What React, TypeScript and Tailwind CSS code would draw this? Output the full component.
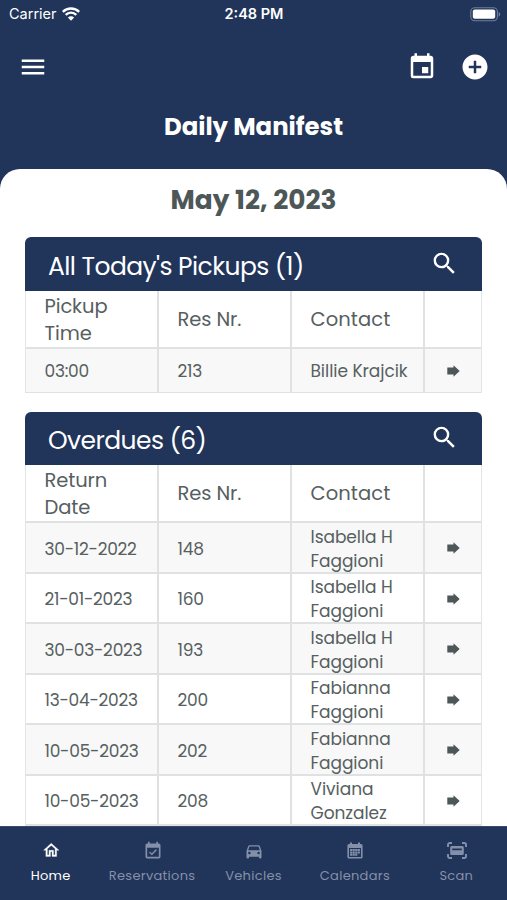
import { MdMenu, MdEvent, MdAddCircle, MdSearch, MdDirectionsCar } from "react-icons/md";
import clsx from "clsx";

type Row = { first: string; res: string; contact: string[] };

const pickups: Row[] = [{ first: "03:00", res: "213", contact: ["Billie Krajcik"] }];

const overdues: Row[] = [
  { first: "30-12-2022", res: "148", contact: ["Isabella H", "Faggioni"] },
  { first: "21-01-2023", res: "160", contact: ["Isabella H", "Faggioni"] },
  { first: "30-03-2023", res: "193", contact: ["Isabella H", "Faggioni"] },
  { first: "13-04-2023", res: "200", contact: ["Fabianna", "Faggioni"] },
  { first: "10-05-2023", res: "202", contact: ["Fabianna", "Faggioni"] },
  { first: "10-05-2023", res: "208", contact: ["Viviana", "Gonzalez"] },
];

function ArrowIcon() {
  return (
    <svg viewBox="0 0 13 12" className="h-3 w-[13px] fill-[#4d5757]">
      <path d="M0.3 2.5H6.5V0.2L12.7 6L6.5 11.8V9.5H0.3Z" />
    </svg>
  );
}

function WifiIcon() {
  return (
    <svg viewBox="0 0 18 14" className="h-3.5 w-[18px]" fill="none" stroke="white" strokeWidth="2.3">
      <path d="M0.8 4.9A11.6 11.6 0 0 1 17.2 4.9" />
      <path d="M3.7 7.9A7.5 7.5 0 0 1 14.3 7.9" />
      <path d="M9 13.7L5.9 10.5A4.4 4.4 0 0 1 12.1 10.5Z" fill="white" stroke="none" />
    </svg>
  );
}

function BatteryIcon() {
  return (
    <svg viewBox="0 0 31 15" className="h-[15px] w-[31px]" fill="none">
      <rect x="0.8" y="0.7" width="26.6" height="13" rx="4" stroke="#6f7e9b" strokeWidth="1.1" />
      <rect x="2.8" y="2.6" width="22.4" height="9.2" rx="2" fill="white" />
      <path d="M28.7 5V9.6C30.7 8.8 30.7 5.8 28.7 5Z" fill="#6f7e9b" />
    </svg>
  );
}

function HomeIcon() {
  return (
    <svg viewBox="0 0 24 24" className="size-[18.5px]" fill="currentColor" stroke="currentColor" strokeWidth="0.4">
      <path d="M12 5.69L17 10.19V18H15V12H9V18H7V10.19L12 5.69M12 3L2 12H5V20H11V14H13V20H19V12H22L12 3Z" />
    </svg>
  );
}

function ReservationIcon() {
  return (
    <svg viewBox="0 0 24 24" className="size-5" fill="currentColor">
      <path d="M19,19H5V8H19M19,3H18V1H16V3H8V1H6V3H5C3.89,3 3,3.9 3,5V19A2,2 0 0,0 5,21H19A2,2 0 0,0 21,19V5A2,2 0 0,0 19,3Z" />
      <path
        d="M16.53,11.06L15.47,10L10.59,14.88L8.47,12.76L7.41,13.82L10.59,17L16.53,11.06Z"
        stroke="currentColor"
        strokeWidth="0.3"
      />
    </svg>
  );
}

function CalendarIcon() {
  return (
    <svg viewBox="0 0 16 17" className="h-[17px] w-4">
      <path
        fill="currentColor"
        fillRule="evenodd"
        d="M3 0.5H5V2H11V0.5H13V2H14A1.6 1.6 0 0 1 15.6 3.6V14.9A1.6 1.6 0 0 1 14 16.5H2A1.6 1.6 0 0 1 .4 14.9V3.6A1.6 1.6 0 0 1 2 2H3ZM2 6V14.9H14V6Z"
      />
      <path
        fill="currentColor"
        d="M3.1 7H5.3V9H3.1ZM5.7 7H7.8V9H5.7ZM8.2 7H10.3V9H8.2ZM10.7 7H12.9V9H10.7ZM3.1 9.4H5.3V11.4H3.1ZM5.7 9.4H7.8V11.4H5.7ZM8.2 9.4H10.3V11.4H8.2ZM10.7 9.4H12.9V11.4H10.7ZM3.1 11.8H5.3V13.8H3.1ZM5.7 11.8H7.8V13.8H5.7ZM8.2 11.8H10.3V13.8H8.2Z"
      />
    </svg>
  );
}

function ScanIcon() {
  return (
    <svg viewBox="0 0 20 17" className="h-[17px] w-5" fill="none" stroke="currentColor">
      <path
        d="M1 5V2.8A1.8 1.8 0 0 1 2.8 1H5M15 1H17.2A1.8 1.8 0 0 1 19 2.8V5M19 12V14.2A1.8 1.8 0 0 1 17.2 16H15M5 16H2.8A1.8 1.8 0 0 1 1 14.2V12"
        strokeWidth="1.9"
      />
      <path
        d="M4.7 4H15.3A1.5 1.5 0 0 1 16.8 5.5V11.5A1.5 1.5 0 0 1 15.3 13H4.7A1.5 1.5 0 0 1 3.2 11.5V5.5A1.5 1.5 0 0 1 4.7 4ZM5.2 6.6V8.2H14.8V6.6Z"
        fill="currentColor"
        fillRule="evenodd"
        stroke="none"
      />
    </svg>
  );
}

const tabs = [
  { label: "Home", icon: <HomeIcon /> },
  { label: "Reservations", icon: <ReservationIcon /> },
  { label: "Vehicles", icon: <MdDirectionsCar className="size-5" /> },
  { label: "Calendars", icon: <CalendarIcon /> },
  { label: "Scan", icon: <ScanIcon /> },
];

function Section({
  title,
  head,
  rows,
  rowClass,
}: {
  title: string;
  head: string[];
  rows: Row[];
  rowClass: string;
}) {
  const cell = "flex items-center border-r-2 border-[#e0e1e2] pl-[18.5px]";
  const grid = "grid grid-cols-[133px_133px_133px_1fr]";

  return (
    <section className="mx-[25px]">
      <div className="flex h-[53.5px] items-center justify-between rounded-t-[6px] bg-[#213459] pr-[23px] pl-[23px] text-white">
        <h2 className="pt-1.5 text-[25px] leading-8 tracking-[-0.57px]">{title}</h2>
        <MdSearch className="mb-px size-[29px]" />
      </div>
      <div className="border-x border-[#e3e4e5] text-[#566060]">
        <div className={clsx(grid, "h-[58px] border-b-2 border-[#e0e1e2] text-[19.5px] leading-[27px]")}>
          <div className={cell}>
            <div className="pt-0.5 tracking-[-0.1px]">
              <div>{head[0]}</div>
              <div>{head[1]}</div>
            </div>
          </div>
          <div className={clsx(cell, "pt-px tracking-[-0.1px]")}>Res Nr.</div>
          <div className={clsx(cell, "pt-px tracking-[0.1px]")}>Contact</div>
          <div />
        </div>
        {rows.map((row, i) => (
          <div
            key={i}
            className={clsx(
              grid,
              rowClass,
              "border-[#e0e1e2] text-[17px] leading-6",
              i % 2 === 0 && "bg-[#f8f8f8]"
            )}
          >
            <div className={clsx(cell, "pt-[1.5px] tracking-[-0.25px]")}>{row.first}</div>
            <div className={clsx(cell, "pt-[1.5px] tracking-[-0.25px]")}>{row.res}</div>
            <div className={clsx(cell, "pt-[1.5px] tracking-[-0.05px]")}>
              <div>
                {row.contact.map((line) => (
                  <div key={line} className="whitespace-nowrap">
                    {line}
                  </div>
                ))}
              </div>
            </div>
            <div className="flex items-center justify-center pt-px">
              <ArrowIcon />
            </div>
          </div>
        ))}
      </div>
    </section>
  );
}

export default function App() {
  return (
    <div className="flex h-[900px] w-[507px] flex-col overflow-hidden bg-[#213459] font-[Poppins,Inter,sans-serif]">
      <header className="h-[169px] shrink-0 text-white">
        <div className="grid h-7 grid-cols-3 items-center pr-[6px] pl-[9px] font-[Inter,sans-serif] text-[14.5px]">
          <div className="flex items-center gap-[5px]">
            <span>Carrier</span>
            <WifiIcon />
          </div>
          <span className="pr-0.5 text-center font-semibold">2:48 PM</span>
          <div className="flex justify-end">
            <BatteryIcon />
          </div>
        </div>
        <div className="flex h-[78px] items-center justify-between pr-[17px] pl-[18px]">
          <MdMenu className="size-[30px]" />
          <div className="flex items-center gap-[23.5px]">
            <MdEvent className="size-[30px]" />
            <MdAddCircle className="size-[30px]" />
          </div>
        </div>
        <h1 className="text-center text-[24.4px] leading-[42px] font-bold">Daily Manifest</h1>
      </header>

      <main className="min-h-0 flex-1 overflow-hidden rounded-t-[20px] bg-white">
        <p className="h-[68px] pt-[10px] text-center text-[26.4px] leading-[42px] font-bold text-[#4d5757]">
          May 12, 2023
        </p>
        <Section
          title="All Today's Pickups (1)"
          head={["Pickup", "Time"]}
          rows={pickups}
          rowClass="h-[44.5px] border-b"
        />
        <div className="h-[18.5px]" />
        <Section
          title="Overdues (6)"
          head={["Return", "Date"]}
          rows={overdues}
          rowClass="h-[50.5px] border-b-2"
        />
      </main>

      <nav className="grid h-[74px] shrink-0 grid-cols-5 border-t border-[#3a4a6a] bg-[#213459] text-[13px]">
        {tabs.map((tab, i) => (
          <div
            key={tab.label}
            className={clsx("flex flex-col items-center pt-3.5", i === 0 ? "text-white" : "text-[#8490aa]")}
          >
            <div className="flex h-[19px] items-center pl-px">{tab.icon}</div>
            <span className="mt-1.5 leading-5 tracking-[0.3px]">{tab.label}</span>
          </div>
        ))}
      </nav>
    </div>
  );
}
